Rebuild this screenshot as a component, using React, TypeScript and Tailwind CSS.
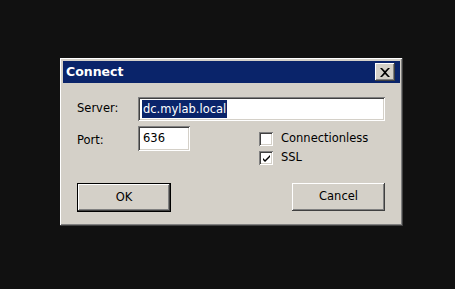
const raised =
  'shadow-[inset_-1px_-1px_0_#404040,inset_1px_1px_0_#ffffff,inset_-2px_-2px_0_#808080,inset_2px_2px_0_#d4d0c8]';
const sunken =
  'shadow-[inset_1px_1px_0_#808080,inset_-1px_-1px_0_#ffffff,inset_2px_2px_0_#404040,inset_-2px_-2px_0_#d4d0c8]';

function Checkbox({ checked }: { checked?: boolean }) {
  return (
    <div className={`flex h-[14px] w-[14px] items-center justify-center bg-white ${sunken}`}>
      {checked && (
        <svg width="9" height="9" viewBox="0 0 9 9">
          <path d="M1 4 L3 6 L8 1 L8 3 L3 8 L1 6 Z" fill="#000" />
        </svg>
      )}
    </div>
  );
}

export default function App() {
  return (
    <div
      className="h-[289px] w-[455px] bg-[#111111] pl-[60px] pt-[58px] text-[11.5px] text-black"
      style={{ fontFamily: '"DejaVu Sans", Tahoma, sans-serif' }}
    >
      <div className={`flex h-[168px] w-[343px] flex-col bg-[#d4d0c8] p-[3px] ${raised}`}>
        {/* title bar */}
        <div className="flex h-[22px] items-center justify-between bg-[#0a246a] pl-[3px] pr-[5px]">
          <span className="text-[12.5px] font-bold text-white">Connect</span>
          <div className={`flex h-[18px] w-[20px] items-center justify-center bg-[#d4d0c8] ${raised}`}>
            <svg width="10" height="9" viewBox="0 0 10 9">
              <path d="M0 0 L2 0 L5 3 L8 0 L10 0 L6 4.5 L10 9 L8 9 L5 6 L2 9 L0 9 L4 4.5 Z" fill="#000" />
            </svg>
          </div>
        </div>

        <div className="flex flex-col pl-[14px] pr-[15px] pt-[14px]">
          <div className="flex items-center">
            <span className="w-[61px]">Server:</span>
            <div className={`flex h-[24px] flex-1 items-center bg-white px-[4px] ${sunken}`}>
              <span className="bg-[#0a246a] px-[1px] leading-[18px] text-white">dc.mylab.local</span>
            </div>
          </div>

          <div className="mt-[5px] flex">
            <span className="mt-[6px] w-[61px]">Port:</span>
            <div className={`flex h-[25px] w-[52px] items-center bg-white px-[5px] ${sunken}`}>636</div>
            <div className="ml-[69px] mt-[6px] flex flex-col gap-[5px]">
              <label className="flex h-[14px] items-center gap-[8px]">
                <Checkbox />
                <span>Connectionless</span>
              </label>
              <label className="flex h-[14px] items-center gap-[8px]">
                <Checkbox checked />
                <span>SSL</span>
              </label>
            </div>
          </div>

          <div className="mt-[18px] flex justify-between">
            <div className="h-[29px] w-[94px] bg-black p-[1px]">
              <div className={`flex h-full w-full items-center justify-center bg-[#d4d0c8] ${raised}`}>OK</div>
            </div>
            <div className={`flex h-[28px] w-[93px] items-center justify-center bg-[#d4d0c8] ${raised}`}>
              Cancel
            </div>
          </div>
        </div>
      </div>
    </div>
  );
}
